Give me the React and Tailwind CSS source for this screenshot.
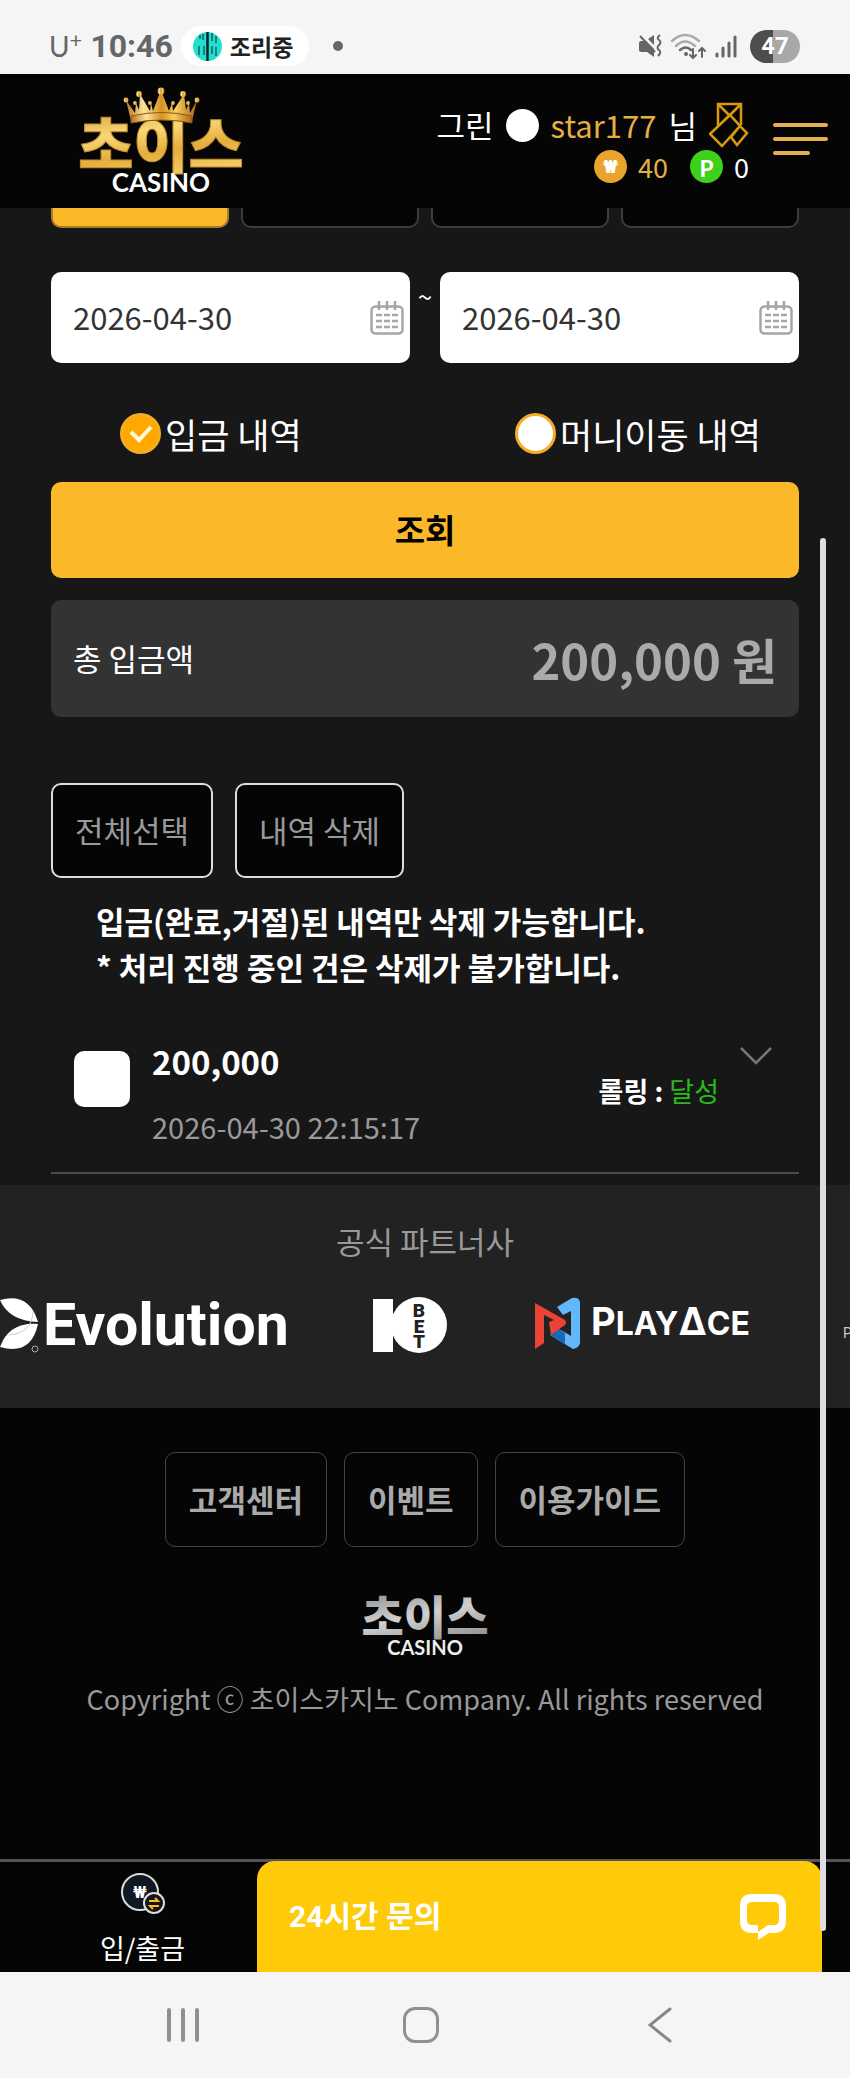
import React, { useState } from 'react';

const tabs = ['입금', '출금', '포인트', '내역'];
const footerLinks = ['고객센터', '이벤트', '이용가이드'];

const StatusBar = () => (
  <div className="flex h-[74px] items-center justify-between bg-[#f5f5f5] pr-[50px] pl-[49px] text-[#666]">
    <div className="flex items-center pt-[18px]">
      <span className="flex items-start font-[Lato] text-[28px] leading-8 font-normal">
        U<span className="text-[22px] leading-5">+</span>
      </span>
      <span className="ml-2 font-[Roboto] text-[32px] leading-8 font-bold">10:46</span>
      <div className="ml-2 flex h-10 items-center gap-2 rounded-full bg-white pr-4 pl-3">
        <svg className="size-[29px]" viewBox="0 0 29 29">
          <circle cx="14.5" cy="14.5" r="14.5" fill="#1fe0cb" />
          <path d="M14.5 0v29" stroke="#123" strokeWidth="2.5" />
          <path d="M7 3v4M6 14v9M10 2v6M11 14v9M19 1v8M19 14v8M23 4v7M23 15v9" stroke="#155e63" strokeWidth="1.5" />
        </svg>
        <span className="text-[23px] leading-8 font-bold text-[#222]">조리중</span>
      </div>
      <span className="ml-6 size-[10px] rounded-full bg-[#666]" />
    </div>
    <div className="flex items-center gap-2 pt-[18px]">
      <svg className="h-7 w-6" viewBox="0 0 24 28" fill="none" stroke="#666" strokeWidth="2">
        <path d="M1 11q0-2 2-2h5l8 8v8l-7-5H3q-2 0-2-2z" fill="#666" stroke="none" />
        <path d="M10 7l6-4v10z" fill="#666" stroke="none" />
        <path d="M2 4l15 16" />
        <path d="M22 3q-4 3-1 5t0 5 0 5-1 6" />
      </svg>
      <svg className="h-7 w-9" viewBox="0 0 36 28" fill="none" strokeWidth="2.5" strokeLinecap="round">
        <path d="M2 9q13-12 27 0" stroke="#aaa" />
        <path d="M6 14q9-9 19 0" stroke="#aaa" />
        <path d="M10 18q6-5 11 0" stroke="#666" />
        <circle cx="16" cy="22" r="2" fill="#666" />
        <path d="M23 17v9m-3-3l3 3 3-3M32 25v-9m-3 3l3-3 3 3" stroke="#666" strokeWidth="2" />
      </svg>
      <svg className="h-7 w-6" viewBox="0 0 24 28" stroke="#666" strokeWidth="3" strokeLinecap="round">
        <path d="M3 22v2M9 16v8M15 11v13M21 5v19" />
      </svg>
      <span className="ml-1 flex h-[33px] w-[50px] items-center justify-center rounded-full bg-linear-to-r from-[#4d4d4d] from-47% to-[#a8a8a8] to-47% font-[Roboto] text-[24px] font-bold text-white">
        47
      </span>
    </div>
  </div>
);

const BrandLogo = () => (
  <svg className="h-[106px] w-[166px] overflow-visible" viewBox="0 0 166 106" role="img" aria-label="초이스 CASINO">
    <defs>
      <linearGradient id="gold" x1="0" y1="0" x2="0.3" y2="1">
        <stop offset="0" stopColor="#c98d25" />
        <stop offset="0.45" stopColor="#f8d877" />
        <stop offset="0.7" stopColor="#e5ad3c" />
        <stop offset="1" stopColor="#f6cf68" />
      </linearGradient>
      <linearGradient id="crown" x1="0" y1="0" x2="1" y2="0">
        <stop offset="0" stopColor="#b8741c" />
        <stop offset="0.25" stopColor="#fbe49a" />
        <stop offset="0.5" stopColor="#d59322" />
        <stop offset="0.7" stopColor="#f7cf5d" />
        <stop offset="1" stopColor="#a96514" />
      </linearGradient>
    </defs>
    <text x="83" y="81" textAnchor="middle" fontFamily="Noto Sans CJK KR" fontSize="60" fontWeight="900" fill="url(#gold)" stroke="#c08a2c" strokeWidth="1">
      초이스
    </text>
    <g fill="url(#crown)">
      <path d="M53 34L48 13l9 13 1-10 3 7 1-16 10 17 1-8 2 8L83 3l8 21 3-8 1 8 11-17 2 16 3-7 1 10 7-13-5 21q-31-8-61 0z" />
      <path d="M53 29q31-7 61 0v7q-30-6-61 0z" stroke="#8d5713" strokeWidth="1" />
      <circle cx="48" cy="13" r="2.5" />
      <circle cx="61" cy="7" r="3" />
      <circle cx="83" cy="4" r="3.5" />
      <circle cx="105" cy="7" r="3" />
      <circle cx="119" cy="13" r="2.5" />
      <circle cx="57" cy="16" r="2" />
      <circle cx="72" cy="16" r="2" />
      <circle cx="95" cy="16" r="2" />
      <circle cx="110" cy="16" r="2" />
    </g>
    <text x="83" y="105" textAnchor="middle" fontFamily="Lato" fontSize="26" fontWeight="700" fill="#fff">
      CASINO
    </text>
  </svg>
);

const Header = () => (
  <header className="flex h-[134px] items-start justify-between bg-[#050505] pr-[22px] pl-[78px]">
    <a href="#home" className="mt-[13px]">
      <BrandLogo />
    </a>
    <div className="flex items-start gap-6">
      <div className="mt-7 flex flex-col items-end">
        <div className="flex h-[46px] items-center gap-3 text-[31px] leading-9 text-white">
          <span>그린</span>
          <span className="size-[33px] rounded-full bg-white" />
          <span className="text-[#e5af45]">star177</span>
          <span>님</span>
          <a href="#messages" aria-label="쪽지">
            <svg className="h-[46px] w-10" viewBox="0 0 40 46" fill="none" stroke="#d99a10" strokeWidth="2.5">
              <path d="M9 25V2h23v21M9 2l21 21M32 2L11 23" />
              <path d="M1 32l20-19 10 11-18 20z" fill="#050505" />
              <path d="M22 35l9-11 7 7-10 12z" fill="#050505" />
            </svg>
          </a>
        </div>
        <div className="flex h-[37px] items-center text-[27px] leading-8">
          <span className="flex size-[33px] items-center justify-center rounded-full bg-[#e8a42c] font-[Roboto] text-[18px] font-black text-white">₩</span>
          <span className="ml-[11px] text-[#e5af45]">40</span>
          <span className="ml-[22px] flex size-[33px] items-center justify-center rounded-full bg-[#3ed01b] text-[22px] font-bold text-white">P</span>
          <span className="ml-[11px] text-white">0</span>
        </div>
      </div>
      <button type="button" aria-label="메뉴" className="mt-[49px] flex w-[55px] flex-col gap-[10px]">
        <span className="h-1 w-full rounded bg-[#e5af50]" />
        <span className="h-1 w-full rounded bg-[#e5af50]" />
        <span className="h-1 w-[37px] rounded bg-[#e5af50]" />
      </button>
    </div>
  </header>
);

const DateField = ({ label, value, onChange }) => (
  <label className="flex h-[91px] min-w-0 flex-1 items-center rounded-[10px] bg-white pr-[6px] pl-[22px]">
    <input
      type="text"
      aria-label={label}
      value={value}
      onChange={(e) => onChange(e.target.value)}
      className="min-w-0 flex-1 bg-transparent text-[31px] text-[#333] outline-none"
    />
    <svg className="h-9 w-[34px]" viewBox="0 0 34 36" fill="none" stroke="#a8a5a8" strokeWidth="2.5">
      <rect x="1.5" y="6.5" width="31" height="27" rx="4" />
      <path d="M9 1v9M17 1v9M25 1v9" />
      <path d="M6 15h6M14 15h6M22 15h6M6 21h6M14 21h6M22 21h6M6 27h6M14 27h6M22 27h6" />
    </svg>
  </label>
);

const TypeRadio = ({ label, value, selected, onSelect }) => (
  <label className="flex items-center gap-1 text-[35px] leading-[40px] text-white">
    <span className="grid size-[41px] place-items-center">
      <input
        type="radio"
        name="historyType"
        checked={selected === value}
        onChange={() => onSelect(value)}
        className="col-start-1 row-start-1 size-[41px] appearance-none rounded-full border-[3px] border-[#f5ac27] bg-white checked:bg-[#ffa800]"
      />
      {selected === value && (
        <svg className="pointer-events-none col-start-1 row-start-1 h-5 w-6" viewBox="0 0 24 20" fill="none" stroke="#fff8d8" strokeWidth="4">
          <path d="M2 8l8 8L22 3" />
        </svg>
      )}
    </span>
    {label}
  </label>
);

const HistorySection = () => {
  const [from, setFrom] = useState('2026-04-30');
  const [to, setTo] = useState('2026-04-30');
  const [type, setType] = useState('deposit');
  const [checked, setChecked] = useState(false);

  return (
    <main className="bg-[#171717] px-[51px] pb-[11px] text-white">
      <div className="grid grid-cols-4 gap-3">
        {tabs.map((tab, i) => (
          <button
            key={tab}
            type="button"
            aria-label={tab}
            className={`h-5 rounded-b-[10px] border-2 border-t-0 ${
              i === 0 ? 'border-[#a97c2b] bg-[#fbb829]' : 'border-[#3c3c3c] bg-[#050505]'
            }`}
          />
        ))}
      </div>

      <div className="mt-11 flex">
        <DateField label="시작일" value={from} onChange={setFrom} />
        <span className="w-[30px] pt-2 text-center text-[26px] leading-8">~</span>
        <DateField label="종료일" value={to} onChange={setTo} />
      </div>

      <div className="mt-[50px] flex justify-between pr-[38px] pl-[69px]">
        <TypeRadio label="입금 내역" value="deposit" selected={type} onSelect={setType} />
        <TypeRadio label="머니이동 내역" value="transfer" selected={type} onSelect={setType} />
      </div>

      <button type="button" className="mt-7 h-24 w-full rounded-[10px] bg-[#fbb829] text-[33px] font-bold text-black">
        조회
      </button>

      <div className="mt-[22px] flex h-[117px] items-center justify-between rounded-[10px] bg-[#333] px-[22px]">
        <span className="text-[31px]">총 입금액</span>
        <strong className="text-[49px] font-bold text-[#aaa]">200,000 원</strong>
      </div>

      <div className="mt-[66px] flex gap-[22px] text-[31px] text-[#999]">
        <button type="button" onClick={() => setChecked(true)} className="h-[95px] rounded-[10px] border-2 border-[#ddd] bg-[#050505] px-[22px]">
          전체선택
        </button>
        <button type="button" className="h-[95px] rounded-[10px] border-2 border-[#ddd] bg-[#050505] px-[22px]">
          내역 삭제
        </button>
      </div>

      <p className="mt-5 pl-[45px] text-[31px] leading-[46px] font-bold">
        입금(완료,거절)된 내역만 삭제 가능합니다.
        <br />* 처리 진행 중인 건은 삭제가 불가합니다.
      </p>

      <div className="mt-7 flex border-b-2 border-[#4a4a4a] pr-[26px] pl-[23px] pt-[19px] pb-[22px]">
        <input
          type="checkbox"
          aria-label="200,000"
          checked={checked}
          onChange={(e) => setChecked(e.target.checked)}
          className="mt-[14px] size-14 appearance-none rounded-[10px] bg-white checked:bg-[#fbb829]"
        />
        <div className="ml-[22px] flex flex-1 flex-col gap-[17px]">
          <span className="text-[33px] leading-[48px] font-bold">200,000</span>
          <span className="text-[29px] leading-[48px] text-[#999]">2026-04-30 22:15:17</span>
        </div>
        <span className="mt-[30px] text-[27px] leading-[48px] font-bold">
          롤링 : <span className="font-normal text-[#29b91c]">달성</span>
        </span>
        <svg className="mt-[10px] ml-5 h-[18px] w-[34px]" viewBox="0 0 34 18" fill="none" stroke="#777" strokeWidth="2.5">
          <path d="M2 1l15 15L32 1" />
        </svg>
      </div>
    </main>
  );
};

const Partners = () => (
  <section className="overflow-hidden bg-[#222] pt-8 pb-[55px]">
    <h2 className="text-center text-[31px] leading-[48px] text-[#999]">공식 파트너사</h2>
    <div className="mt-8 flex h-14 w-max items-start">
      <svg className="h-14 w-[290px] overflow-visible" viewBox="0 0 290 56" role="img" aria-label="Evolution">
        <path d="M0 3Q29-5 38 25 9 24 0 3z" fill="#fff" />
        <path d="M0 50Q9 25 38 27q-7 32-38 23z" fill="#fff" />
        <path d="M9 38q23-2 24-23" fill="none" stroke="#ccc" strokeWidth="1" />
        <circle cx="35" cy="52" r="3" fill="none" stroke="#aaa" />
        <text x="43" y="48" fontFamily="Roboto" fontSize="59" fontWeight="700" fill="#fff">Evolution</text>
      </svg>
      <svg className="ml-[83px] h-14 w-[75px] overflow-visible" viewBox="0 0 75 56" role="img" aria-label="10BET">
        <path d="M0 2h20v53H0z" fill="#fff" />
        <circle cx="46" cy="28" r="28" fill="#fff" />
        <g fontFamily="Roboto" fontSize="19" fontWeight="900" fill="#222" textAnchor="middle">
          <text x="46" y="20">B</text>
          <text x="46" y="36">E</text>
          <text x="46" y="51">T</text>
        </g>
      </svg>
      <svg className="ml-[87px] h-14 w-[225px] overflow-visible" viewBox="0 0 225 56" role="img" aria-label="PLAYACE">
        <path d="M22 10L37 1q8-1 8 5v40q-1 5-7 6L15 38l11-5 10 6V14l-8 4z" fill="#63b7fb" />
        <path d="M15 38l9-6 6 4v11z" fill="#1769b5" />
        <path d="M0 6l30 17q2 3 0 5L16 38l-2-13 5-2-10-5v28l-9 6z" fill="#e94436" />
        <text x="56" y="38" fontFamily="Inter" fontSize="38" fontWeight="700" fill="#fff">
          P<tspan fontSize="32">LAY</tspan>Δ<tspan fontSize="32">CE</tspan>
        </text>
      </svg>
      <span className="ml-[83px] pt-6 font-[Roboto] text-[14px] leading-6 text-[#ccc]">P</span>
    </div>
  </section>
);

const Footer = () => (
  <footer className="flex flex-col items-center bg-[#050505] pt-11 pb-[140px] text-[#999]">
    <nav className="flex gap-[17px]">
      {footerLinks.map((link) => (
        <a key={link} href="#footer" className="flex h-[95px] items-center rounded-[10px] border border-[#444] px-[23px] text-[31px] font-bold text-[#aaa]">
          {link}
        </a>
      ))}
    </nav>
    <svg className="mt-[46px] h-[66px] w-[128px] overflow-visible" viewBox="0 0 128 66" role="img" aria-label="초이스 CASINO">
      <defs>
        <linearGradient id="silver" x1="0" y1="0" x2="0.4" y2="1">
          <stop offset="0" stopColor="#777" />
          <stop offset="0.6" stopColor="#d0d0d0" />
          <stop offset="1" stopColor="#999" />
        </linearGradient>
      </defs>
      <text x="64" y="41" textAnchor="middle" fontFamily="Noto Sans CJK KR" fontSize="46" fontWeight="900" fill="url(#silver)">
        초이스
      </text>
      <text x="64" y="62" textAnchor="middle" fontFamily="Lato" fontSize="20" fontWeight="700" fill="#eee">
        CASINO
      </text>
    </svg>
    <p className="mt-5 text-[27px] leading-[40px]">Copyright ⓒ 초이스카지노 Company. All rights reserved</p>
  </footer>
);

const BottomBar = () => (
  <div className="flex h-[113px] border-t-[3px] border-[#555] bg-[#050505] pr-7">
    <a href="#cash" className="flex w-[257px] flex-col items-center pl-7 text-white">
      <svg className="mt-2 h-[46px] w-[46px]" viewBox="0 0 46 46" fill="none" stroke="#ddd" strokeWidth="2">
        <circle cx="20" cy="22" r="18" fill="#101824" />
        <text x="20" y="28" textAnchor="middle" fontFamily="Roboto" fontSize="17" fontWeight="700" fill="#fff" stroke="none">₩</text>
        <circle cx="34" cy="33" r="10" fill="#151515" />
        <path d="M29 31h9l-3-3M39 36h-9l3 3" stroke="#fbb829" />
      </svg>
      <span className="mt-3 text-[27px] leading-[40px]">입/출금</span>
    </a>
    <button type="button" className="-mt-px flex flex-1 items-center justify-between rounded-t-[18px] bg-[#ffca08] pr-9 pl-8 text-white">
      <span className="font-[Roboto,'Noto_Sans_CJK_KR',sans-serif] text-[30px] font-bold">24시간 문의</span>
      <svg className="h-[46px] w-[46px]" viewBox="0 0 46 46">
        <path d="M12 0h22q12 0 12 12v15q0 12-12 12h-5l-11 7v-7h-6Q0 39 0 27V12Q0 0 12 0z" fill="#fff" />
        <path d="M12 8h22q5 0 5 5v13q0 5-5 5h-6l-10 7v-7h-6q-5 0-5-5V13q0-5 5-5z" fill="#ffca08" />
      </svg>
    </button>
  </div>
);

const SystemNav = () => (
  <nav className="grid h-[106px] grid-cols-3 place-items-center bg-[#f5f5f6] pr-[71px] pl-16">
    <button type="button" aria-label="최근 앱" className="flex gap-[10px]">
      <span className="h-[34px] w-1 rounded bg-[#909090]" />
      <span className="h-[34px] w-1 rounded bg-[#909090]" />
      <span className="h-[34px] w-1 rounded bg-[#909090]" />
    </button>
    <button type="button" aria-label="홈" className="size-9 rounded-[12px] border-[3px] border-[#909090]" />
    <button type="button" aria-label="뒤로">
      <svg className="h-9 w-6" viewBox="0 0 24 36" fill="none" stroke="#888" strokeWidth="3" strokeLinecap="round">
        <path d="M22 2L2 18l20 16" />
      </svg>
    </button>
  </nav>
);

const App = () => (
  <div className="relative w-full overflow-hidden bg-[#050505] font-['Noto_Sans_CJK_KR',sans-serif]">
    <StatusBar />
    <Header />
    <HistorySection />
    <Partners />
    <Footer />
    <BottomBar />
    <SystemNav />
    <div className="absolute top-[538px] right-6 bottom-[147px] w-[6px] rounded-full bg-[#dedde0]" />
  </div>
);

export default App;
